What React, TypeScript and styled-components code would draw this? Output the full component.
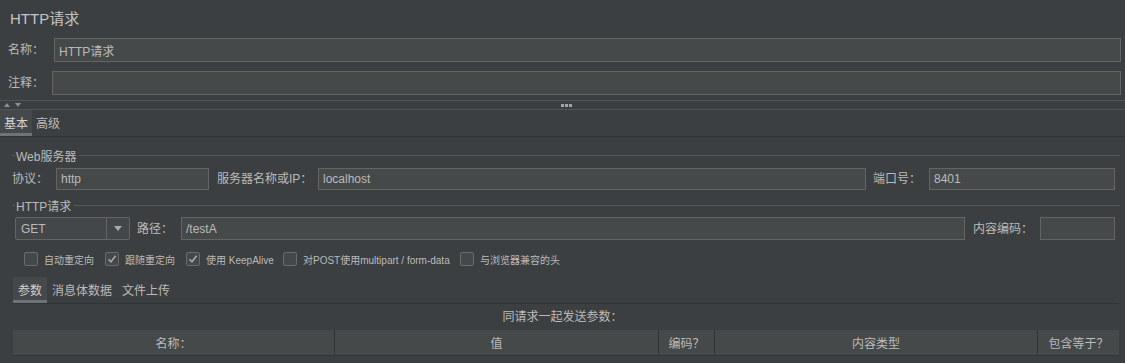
import React from "react";
import styled, { createGlobalStyle } from "styled-components";

const GlobalStyle = createGlobalStyle`
  html, body { margin: 0; padding: 0; background: #3c3f41; }
  * { box-sizing: border-box; }
`;

const FONT = `"Liberation Sans", "Noto Sans CJK SC", sans-serif`;

const Page = styled.div`
  width: 1125px;
  height: 363px;
  overflow: hidden;
  background: #3c3f41;
  color: #bbbbbb;
  font-family: ${FONT};
  font-size: 12px;
  display: flex;
  flex-direction: column;
`;

const Title = styled.div`
  height: 36px;
  line-height: 38px;
  padding-left: 10px;
  font-size: 15px;
  color: #c4c4c4;
`;

const FieldRow = styled.div<{ $mt: number; $labelW: number }>`
  display: flex;
  align-items: center;
  height: 24px;
  margin-top: ${(p) => p.$mt}px;
  padding-left: 8px;
  padding-right: 4px;
  & > span:first-child {
    width: ${(p) => p.$labelW}px;
    flex: none;
  }
`;

const Label = styled.span<{ $w?: number; $ml?: number }>`
  flex: none;
  white-space: nowrap;
  line-height: 1;
  ${(p) => (p.$w ? `width: ${p.$w}px;` : "")}
  ${(p) => (p.$ml ? `margin-left: ${p.$ml}px;` : "")}
`;

const TextField = styled.div<{ $w?: number; $h?: number }>`
  height: ${(p) => p.$h ?? 24}px;
  ${(p) => (p.$w ? `width: ${p.$w}px; flex: none;` : "flex: 1;")}
  background: #45494a;
  border: 1px solid #646464;
  padding-left: 4px;
  display: flex;
  align-items: center;
  color: #bbbbbb;
  font-size: 12px;
  white-space: nowrap;
  overflow: hidden;
`;

const Splitter = styled.div`
  height: 15px;
  padding-top: 5px;
  display: flex;
  flex-direction: column;
`;

const SplitLine = styled.div`
  height: 1px;
  background: #515456;
`;

const SplitGrip = styled.div`
  position: relative;
  height: 8px;
  display: flex;
  align-items: center;
  padding-left: 4px;
  gap: 5px;
`;

const Arrow = styled.div<{ $up?: boolean }>`
  width: 0;
  height: 0;
  border-left: 3.5px solid transparent;
  border-right: 3.5px solid transparent;
  ${(p) =>
    p.$up
      ? "border-bottom: 4px solid #8e9193;"
      : "border-top: 4px solid #8e9193;"}
`;

const Dots = styled.div`
  position: absolute;
  left: 561px;
  top: 3px;
  display: flex;
  gap: 1px;
  & > i {
    width: 3px;
    height: 3px;
    background: #a2a4a6;
    display: block;
  }
`;

const TabBar = styled.div<{ $ml?: number; $mr?: number; $mt?: number }>`
  display: flex;
  height: 27px;
  margin-top: ${(p) => p.$mt ?? 0}px;
  margin-left: ${(p) => p.$ml ?? 0}px;
  margin-right: ${(p) => p.$mr ?? 0}px;
  border-bottom: 1px solid #313335;
`;

const Tab = styled.div<{ $active?: boolean }>`
  padding: 0 4px 2px;
  display: flex;
  align-items: center;
  font-size: 12px;
  color: ${(p) => (p.$active ? "#d0d0d0" : "#bbbbbb")};
  background: ${(p) => (p.$active ? "#45494b" : "transparent")};
  box-shadow: ${(p) => (p.$active ? "inset 0 -3px 0 #6e7378" : "none")};
`;

const Tab2 = styled(Tab)`
  padding: 0 5px 1px;
`;

const Content = styled.div`
  padding-top: 8px;
  display: flex;
  flex-direction: column;
`;

const SectionHeader = styled.div<{ $mt?: number }>`
  height: 20px;
  margin-top: ${(p) => p.$mt ?? 0}px;
  margin-left: 12px;
  margin-right: 5px;
  display: flex;
  align-items: center;
  font-size: 12px;
  &::before {
    content: "";
    width: 3px;
    height: 1px;
    background: #555759;
    margin-right: 1px;
  }
  &::after {
    content: "";
    flex: 1;
    height: 1px;
    background: #555759;
    margin-left: 3px;
  }
`;

const InputRow = styled.div<{ $mt: number; $h: number; $pl: number }>`
  display: flex;
  align-items: center;
  height: ${(p) => p.$h}px;
  margin-top: ${(p) => p.$mt}px;
  padding-left: ${(p) => p.$pl}px;
  padding-right: 10px;
`;

const Combo = styled.div`
  width: 115px;
  height: 23px;
  flex: none;
  display: flex;
  border: 1px solid #646464;
  border-radius: 2px;
  background: #43474a;
`;

const ComboText = styled.div`
  width: 91px;
  padding-left: 5px;
  display: flex;
  align-items: center;
  border-right: 1px solid #646464;
  font-size: 12px;
`;

const ComboButton = styled.div`
  flex: 1;
  display: flex;
  align-items: center;
  justify-content: center;
  &::after {
    content: "";
    width: 0;
    height: 0;
    border-left: 4px solid transparent;
    border-right: 4px solid transparent;
    border-top: 5px solid #a9abad;
  }
`;

const CheckRow = styled.div`
  display: flex;
  align-items: center;
  height: 14px;
  margin-top: 12px;
  padding-left: 24px;
`;

const CheckItem = styled.div<{ $w?: number }>`
  display: flex;
  align-items: center;
  gap: 6px;
  ${(p) => (p.$w ? `width: ${p.$w}px;` : "")}
  flex: none;
  font-size: 10px;
  white-space: nowrap;
`;

const Box = styled.div`
  width: 14px;
  height: 14px;
  border: 1px solid #6b6b6b;
  border-radius: 2px;
  background: #43494a;
  display: flex;
  align-items: center;
  justify-content: center;
`;

const ParamsCaption = styled.div`
  height: 26px;
  display: flex;
  align-items: center;
  justify-content: center;
  padding-bottom: 3px;
  font-size: 12px;
`;

const TableHeader = styled.div`
  margin-left: 13px;
  margin-right: 6px;
  height: 26px;
  display: grid;
  grid-template-columns: 322px 324px 56px 323px 1fr;
  background: #45494a;
  border-bottom: 1px solid #313335;
`;

const HeaderCell = styled.div<{ $last?: boolean }>`
  display: flex;
  align-items: center;
  justify-content: center;
  font-size: 12px;
  border-right: ${(p) => (p.$last ? "none" : "1px solid #313335")};
`;

const Check = () => (
  <svg width="10" height="10" viewBox="0 0 10 10">
    <path d="M1.5 5.2 L4 7.8 L8.6 1.8" stroke="#a8aaac" strokeWidth="1.5" fill="none" />
  </svg>
);

const checks: { label: string; checked: boolean; w?: number }[] = [
  { label: "自动重定向", checked: false, w: 81 },
  { label: "跟随重定向", checked: true, w: 81 },
  { label: "使用 KeepAlive", checked: true, w: 97 },
  { label: "对POST使用multipart / form-data", checked: false, w: 177 },
  { label: "与浏览器兼容的头", checked: false },
];

const headers = ["名称：", "值", "编码？", "内容类型", "包含等于？"];

export default function App() {
  return (
    <>
      <GlobalStyle />
      <Page>
        <Title>HTTP请求</Title>
        <FieldRow $mt={2} $labelW={46}>
          <Label>名称：</Label>
          <TextField>HTTP请求</TextField>
        </FieldRow>
        <FieldRow $mt={9} $labelW={44}>
          <Label>注释：</Label>
          <TextField />
        </FieldRow>
        <Splitter>
          <SplitLine />
          <SplitGrip>
            <Arrow $up />
            <Arrow />
            <Dots>
              <i />
              <i />
              <i />
            </Dots>
          </SplitGrip>
          <SplitLine />
        </Splitter>
        <TabBar>
          <Tab $active>基本</Tab>
          <Tab>高级</Tab>
        </TabBar>
        <Content>
          <SectionHeader>Web服务器</SectionHeader>
          <InputRow $mt={3} $h={22} $pl={12}>
            <Label $w={44}>协议：</Label>
            <TextField $w={153} $h={22}>http</TextField>
            <Label $w={101} $ml={8}>服务器名称或IP：</Label>
            <TextField $h={22}>localhost</TextField>
            <Label $w={56} $ml={7}>端口号：</Label>
            <TextField $w={186} $h={22}>8401</TextField>
          </InputRow>
          <SectionHeader $mt={5}>HTTP请求</SectionHeader>
          <InputRow $mt={2} $h={23} $pl={15}>
            <Combo>
              <ComboText>GET</ComboText>
              <ComboButton />
            </Combo>
            <Label $w={44} $ml={7}>路径：</Label>
            <TextField $h={23}>/testA</TextField>
            <Label $w={67} $ml={8}>内容编码：</Label>
            <TextField $w={75} $h={23} />
          </InputRow>
          <CheckRow>
            {checks.map((c) => (
              <CheckItem key={c.label} $w={c.w}>
                <Box>{c.checked && <Check />}</Box>
                <span>{c.label}</span>
              </CheckItem>
            ))}
          </CheckRow>
          <TabBar $ml={13} $mr={6} $mt={11}>
            <Tab2 $active>参数</Tab2>
            <Tab2>消息体数据</Tab2>
            <Tab2>文件上传</Tab2>
          </TabBar>
          <ParamsCaption>同请求一起发送参数：</ParamsCaption>
          <TableHeader>
            {headers.map((h, i) => (
              <HeaderCell key={h} $last={i === headers.length - 1}>
                {h}
              </HeaderCell>
            ))}
          </TableHeader>
        </Content>
      </Page>
    </>
  );
}
